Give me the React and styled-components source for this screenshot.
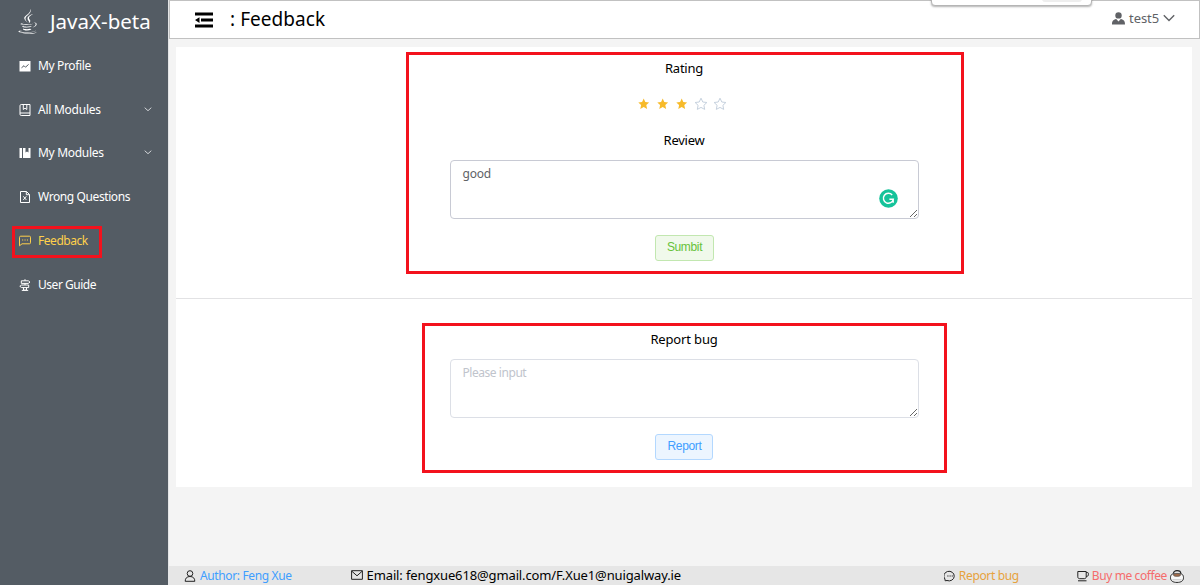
import React from 'react';
import styled, { createGlobalStyle, css } from 'styled-components';
import { FaJava } from 'react-icons/fa';

const Global = createGlobalStyle`
  *, *::before, *::after { box-sizing: border-box; }
  body { margin: 0; font-family: "Noto Sans", "Open Sans", sans-serif; color: #000; overflow: hidden; }
`;

const Page = styled.div`
  display: flex;
  width: 1200px;
  height: 585px;
  background: #f4f4f4;
`;

const Sidebar = styled.nav`
  width: 168px;
  flex: none;
  background: #545c64;
  color: #fff;
`;

const Brand = styled.div`
  display: flex;
  align-items: center;
  gap: 10px;
  height: 44px;
  padding: 0 0 2px 15px;
  svg { flex: none; }
`;

const Text = styled.span`
  white-space: nowrap;
  font-size: ${p => p.$size || 12.5}px;
  letter-spacing: ${p => p.$track || 0}px;
  line-height: 20px;
  color: ${p => p.$color || 'inherit'};
`;

const MenuItem = styled.a`
  position: relative;
  display: flex;
  align-items: center;
  height: 43.75px;
  padding: 0 16px 0 19px;
  color: ${p => (p.$active ? '#ffd04b' : '#fff')};
  > svg:first-child { margin-right: 7px; flex: none; }
  > svg:nth-child(3) { margin-left: auto; }
  ${p => p.$active && css`
    &::after {
      content: "";
      position: absolute;
      left: 12px;
      top: 7px;
      width: 90px;
      height: 32px;
      border: 3px solid #f3121d;
    }
  `}
`;

const Main = styled.div`
  flex: 1;
  display: flex;
  flex-direction: column;
  min-width: 0;
  border-left: 1px solid #e4e5e6;
`;

const Header = styled.header`
  position: relative;
  display: flex;
  align-items: center;
  height: 39px;
  padding: 0 24px 0 25px;
  background: #fff;
  border: 1px solid #c1c1c1;
`;

const Title = styled(Text)`
  margin-left: 17px;
  padding-bottom: 2px;
`;

const User = styled.div`
  display: flex;
  align-items: center;
  gap: 4px;
  margin-left: auto;
  color: #606266;
  padding-bottom: 3px;
`;

const Popup = styled.div`
  position: absolute;
  left: 761px;
  top: -8px;
  width: 161px;
  height: 13px;
  background: #fff;
  border: 1px solid #b5b5b5;
  border-radius: 4px;
  box-shadow: 0 1px 2px rgba(0, 0, 0, 0.3);
  &::after {
    content: "";
    position: absolute;
    right: 9px;
    top: 0;
    width: 40px;
    height: 8px;
    border-radius: 3px;
    background: #eee;
  }
`;

const Card = styled.main`
  width: 1016px;
  height: 440px;
  margin: 8px 0 0 7px;
  background: #fff;
`;

const Section = styled.section`
  display: flex;
  justify-content: center;
  height: ${p => p.$height}px;
  padding-top: ${p => p.$top}px;
  padding-left: 1px;
  ${p => p.$divided && 'border-bottom: 1px solid #e2e2e4;'}
`;

const Outline = styled.div`
  display: flex;
  flex-direction: column;
  align-items: center;
  width: ${p => p.$width}px;
  height: ${p => p.$height}px;
  padding-top: ${p => p.$top}px;
  padding-right: 1px;
  border: 3px solid #f3121d;
`;

const Stars = styled.div`
  display: flex;
  gap: 4.8px;
  height: 14px;
  margin: 19px 0 19px 0;
  padding-right: 4px;
`;

const Field = styled.div`
  position: relative;
  width: 469px;
  height: 59px;
  margin-top: ${p => p.$top}px;
`;

const Area = styled.textarea`
  display: block;
  width: 469px;
  height: 59px;
  padding: 4px 12px;
  border: 1px solid ${p => p.$border};
  border-radius: 4px;
  outline: none;
  resize: vertical;
  color: #606266;
  font: 12px/18px "Noto Sans", sans-serif;
  letter-spacing: ${p => p.$track}px;
  &::placeholder { color: #c0c4cc; }
`;

const Assistant = styled.svg`
  position: absolute;
  left: 429px;
  top: 29px;
`;

const Button = styled.button`
  width: ${p => p.$width}px;
  height: 26px;
  margin-top: 16px;
  padding: 0 0 2px 1px;
  border-radius: 3px;
  font: 12px "Liberation Sans", Arial, sans-serif;
  letter-spacing: -0.35px;
  ${p => p.$kind === 'success'
    ? 'color:#67c23a;background:#f0f9eb;border:1px solid #c2e7b0;'
    : 'color:#409eff;background:#ecf5ff;border:1px solid #b3d8ff;'}
`;

const Footer = styled.footer`
  display: flex;
  align-items: center;
  height: 19px;
  margin-top: auto;
  padding: 0 16px 1px 15px;
  background: #e6e6e6;
  svg { flex: none; }
`;

const FootItem = styled.div`
  display: flex;
  align-items: center;
  gap: ${p => p.$gap || 3}px;
  padding-top: ${p => p.$drop || 0}px;
  margin-left: ${p => (p.$push ? 'auto' : `${p.$left || 0}px`)};
`;

const Icon = ({ size = 12, children, ...rest }) => (
  <svg width={size} height={size} viewBox="0 0 12 12" fill="none" stroke="currentColor" strokeWidth="1" {...rest}>
    {children}
  </svg>
);

const icons = {
  profile: (
    <Icon><rect x="0.5" y="1" width="11" height="10.5" fill="currentColor" stroke="none" /><path d="M2.5 7.8 5 5.7l1.5 1.5L9.6 4.4" stroke="#545c64" /></Icon>
  ),
  all: (
    <Icon><path d="M2.2.5H11v11H2.2C1.4 11.5 1 11 1 10.4V1.7C1 1 1.5.5 2.2.5ZM1 9h10M4.3.5v5L6 4.2l1.8 1.3v-5" /></Icon>
  ),
  mine: (
    <Icon><path d="M.5 1H3v10H.5ZM4 1h2.5v4.6L8 4.6l1.5 1V1h2v10H4Z" fill="currentColor" stroke="none" /></Icon>
  ),
  wrong: (
    <Icon><path d="M1.5.5h6l3 3v8h-9ZM7.3.5v3.2h3.2M4.3 5.3l3 3.6M7.3 5.3l-3 3.6" /></Icon>
  ),
  chat: (
    <Icon><path d="M1.7 1.2h8.8c.6 0 1 .4 1 1v5.6c0 .6-.4 1-1 1H3L.5 10.8V2.3c0-.7.5-1.1 1.2-1.1Z" /><path d="M3.1 5h1.1M5.5 5h1.1M7.9 5H9" /></Icon>
  ),
  guide: (
    <Icon><path d="M2.3 1.8h7l1.7 1.3-1.7 1.3h-7ZM9.7 6H2.6L.8 7.3l1.8 1.3h7.1ZM6 .2v1.6M6 4.4V6M4.5 8.6v2.5h3V8.6M2.8 11.4h6.4" /></Icon>
  ),
};

const Chevron = () => (
  <svg width="8" height="8" viewBox="0 0 8 8" fill="none" stroke="#dfe1e3" strokeWidth="0.9"><path d="m.7 1.7 3.3 3 3.3-3" /></svg>
);

const menu = [
  { icon: 'profile', label: 'My Profile', track: -0.35 },
  { icon: 'all', label: 'All Modules', track: -0.25, sub: true },
  { icon: 'mine', label: 'My Modules', track: -0.3, sub: true },
  { icon: 'wrong', label: 'Wrong Questions', track: -0.4 },
  { icon: 'chat', label: 'Feedback', track: -0.45, active: true },
  { icon: 'guide', label: 'User Guide', track: -0.47 },
];

const Star = ({ on }) => (
  <svg width="14" height="14" viewBox="0 0 14 14" fill={on ? '#f7ba2a' : 'none'} stroke={on ? 'none' : '#c6d1de'} strokeWidth="1">
    <path d={on
      ? 'M6.7 1.5 8.3 5l3.8.4-2.8 2.6.8 3.9-3.4-1.9L3.3 12l.8-3.9L1.3 5.5 5.1 5Z'
      : 'M7 1.2 8.8 5l4.1.5-3 2.8.8 4.1L7 10.4l-3.7 2 .8-4.1-3-2.8L5.2 5Z'} />
  </svg>
);

export default function App() {
  return (
    <Page>
      <Global />
      <Sidebar>
        <Brand>
          <FaJava size={25} />
          <Text $size={20.5} $track={0}>JavaX-beta</Text>
        </Brand>
        {menu.map(m => (
          <MenuItem key={m.label} $active={m.active}>
            {icons[m.icon]}
            <Text $size={12} $track={m.track}>{m.label}</Text>
            {m.sub && <Chevron />}
          </MenuItem>
        ))}
      </Sidebar>
      <Main>
        <Header>
          <svg width="18" height="16" viewBox="0 0 18 16">
            <path d="M0 0.6h18v3H0ZM6 6.6h12v3H6ZM0 12.6h18v3H0ZM0 8.1l4.5-2.8v5.7Z" />
          </svg>
          <Title $size={19} $track={0.05}>: Feedback</Title>
          <User>
            <svg width="13" height="13" viewBox="0 0 13 13" fill="#606266">
              <circle cx="6.5" cy="3.4" r="3.2" />
              <path d="M0 12.6c0-3.3 1-4.7 4.2-5.5l2.3 2.5 2.3-2.5c3.2.8 4.2 2.2 4.2 5.5Z" />
            </svg>
            <Text $size={13} $track={-0.1}>test5</Text>
            <svg width="12" height="8" viewBox="0 0 12 8" fill="none" stroke="#606266" strokeWidth="1.4"><path d="m.8 1.3 5.2 5.2 5.2-5.2" /></svg>
          </User>
          <Popup />
        </Header>
        <Card>
          <Section $height={252} $top={5} $divided>
            <Outline $width={558} $height={222} $top={3}>
              <Text $size={13} $track={-0.25}>Rating</Text>
              <Stars>{[1, 2, 3, 4, 5].map(n => <Star key={n} on={n <= 3} />)}</Stars>
              <Text $size={13} $track={-0.25}>Review</Text>
              <Field $top={10}>
                <Area $border="#c8cad4" $track={-0.25} defaultValue="good" spellCheck={false} />
                <Assistant width="19" height="19" viewBox="0 0 19 19" fill="none">
                  <circle cx="9.5" cy="9.5" r="9.3" fill="#15c39a" />
                  <path d="M13.2 6A5 5 0 1 0 14.3 10.3H10.4M14.2 10.2v3.6" stroke="#fff" strokeWidth="1.4" />
                </Assistant>
              </Field>
              <Button $kind="success" $width={59}>Sumbit</Button>
            </Outline>
          </Section>
          <Section $height={188} $top={24}>
            <Outline $width={525} $height={150} $top={3}>
              <Text $size={13} $track={-0.15}>Report bug</Text>
              <Field $top={10}>
                <Area $border="#dcdfe6" $track={-0.45} placeholder="Please input" />
              </Field>
              <Button $width={58}>Report</Button>
            </Outline>
          </Section>
        </Card>
        <Footer>
          <FootItem $drop={2} $gap={4}>
            <Icon><circle cx="6" cy="3.5" r="2.8" stroke="#222" /><path d="M1.2 11.3c0-3 1.6-4.8 4.8-4.8s4.8 1.8 4.8 4.8Z" stroke="#222" /></Icon>
            <Text $size={12} $track={-0.37} $color="#409eff">Author: Feng Xue</Text>
          </FootItem>
          <FootItem $left={59} $gap={4}>
            <Icon><path d="M.6 1.7h10.8v8.6H.6ZM.8 2.2 6 6.8l5.2-4.6" stroke="#222" /></Icon>
            <Text $size={13} $track={-0.13}>Email: fengxue618@gmail.com/F.Xue1@nuigalway.ie</Text>
          </FootItem>
          <FootItem $push $drop={2}>
            <Icon><path d="M1.2 10.8.9 9A5.2 4.8 0 1 1 3 10.5Z" stroke="#222" /><path d="M3.3 6h1.2M5.5 6h1.2M7.7 6h1.2" stroke="#222" /></Icon>
            <Text $size={12} $track={-0.35} $color="#e6a23c">Report bug</Text>
          </FootItem>
          <FootItem $left={58} $drop={2}>
            <Icon><path d="M.8 1.5h8.4v5.3c0 1.2-.7 1.9-1.9 1.9H2.7C1.5 8.7.8 8 .8 6.8ZM9.2 2.5h1.2c.6 0 1 .4 1 1v1.2c0 1-.8 1.8-2.2 1.8M1 10.8h8.5" stroke="#222" /></Icon>
            <Text $size={12} $track={-0.4} $color="#f56c6c">Buy me coffee</Text>
            <svg width="14" height="13" viewBox="0 0 14 13" fill="#f8f8f8" stroke="#222" strokeWidth="1">
              <path d="M2.5 4C1 4.7.5 6 .5 7.6.5 11 3 12.4 7 12.4s6.5-1.4 6.5-4.8c0-1.6-.6-3-2-3.7Z" />
              <path d="M3.5 3.5C3.5 1.6 5 .7 7 .7s3.8.9 3.8 2.8" fill="none" strokeWidth="1.2" />
              <ellipse cx="7" cy="4.9" rx="3.6" ry="1.5" fill="#a06a48" stroke="#555" strokeWidth=".6" />
              <path d="M2.5 9.8h9" stroke="#aaa" strokeWidth=".7" />
            </svg>
          </FootItem>
        </Footer>
      </Main>
    </Page>
  );
}
